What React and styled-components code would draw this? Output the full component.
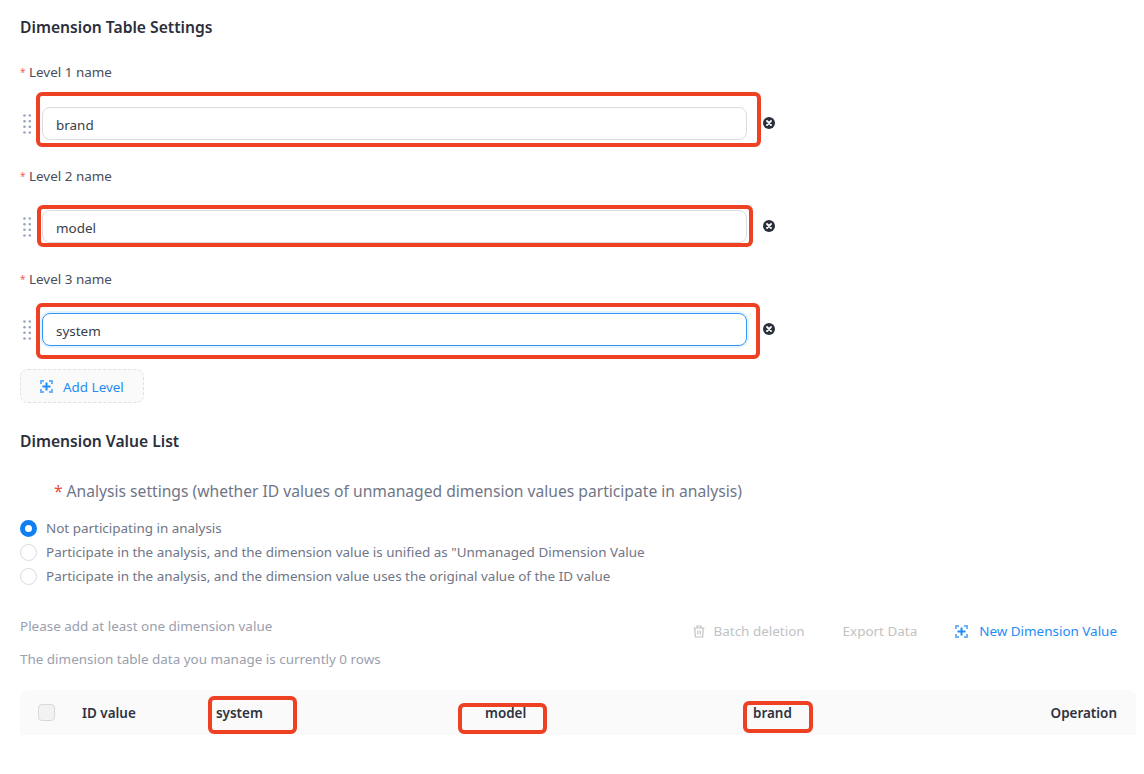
import React from "react";
import styled, { createGlobalStyle } from "styled-components";

const Global = createGlobalStyle`
  html, body { margin: 0; padding: 0; background: #fff; }
  body { font-family: "Noto Sans", "Open Sans", sans-serif; font-size: 13.45px; color: #2e3240; }
`;
const Page = styled.div`
  box-sizing: border-box;
  width: 1144px;
  height: 774px;
  overflow: hidden;
  padding: 16px 8px 0 20px;
`;
const Title = styled.h2`
  margin: ${(p) => p.$mt || 0}px 0 0;
  font-size: 15.65px;
  line-height: 22px;
  font-weight: 600;
  color: #2b2f3b;
`;
const Levels = styled.div`
  display: flex;
  flex-direction: column;
  gap: 24px;
  margin-top: 23px;
  width: 756px;
`;
const Level = styled.div`
  display: flex;
  flex-direction: column;
  gap: 24px;
`;
const Label = styled.label`
  display: flex;
  align-items: center;
  gap: 2px;
  font-size: 13.45px;
  line-height: 22px;
  color: #4a4e5c;
  position: relative;
  top: ${(p) => (p.$n > 1 ? 1 : 0)}px;
`;
const Star = styled.span`
  color: #f5605a;
  font-size: 10px;
  width: 7px;
`;
const Row = styled.div`
  display: flex;
  align-items: center;
  position: relative;
  height: 33px;
`;
const InputBox = styled.div`
  box-sizing: border-box;
  width: 705px;
  height: 33px;
  margin-left: 11px;
  padding: 2px 13px 0;
  border-radius: 8px;
  border: 1px solid ${(p) => (p.$focus ? "#2f95f7" : "#dcdcdc")};
  box-shadow: ${(p) => (p.$focus ? "0 0 0 2px #e6f3fe" : "none")};
  display: flex;
  align-items: center;
  font-size: 13.45px;
  color: #3a3e4b;
`;
const RemoveIcon = styled.svg`
  margin: 0 0 1px 16px;
  flex: none;
`;
const Mark = styled.div`
  position: absolute;
  box-sizing: border-box;
  border: 4px solid #ee4023;
  border-radius: 6px;
  pointer-events: none;
  left: ${(p) => p.$l}px;
  top: ${(p) => p.$t}px;
  width: ${(p) => p.$w}px;
  height: ${(p) => p.$h}px;
`;
const AddButton = styled.button`
  box-sizing: border-box;
  display: flex;
  align-items: center;
  gap: 10px;
  margin-top: 23px;
  width: 124px;
  height: 34px;
  padding: 1px 0 0 19px;
  background: #fafafa;
  border: 1px dashed #e0e0e0;
  border-radius: 8px;
  color: #1f8cf5;
  font: inherit;
  font-size: 13.45px;
`;
const Analysis = styled.div`
  margin: 27px 0 0 34px;
  font-size: 15.63px;
  line-height: 24px;
  color: #6f7687;
`;
const Req = styled.span`
  color: #e5483d;
  margin-right: 4px;
`;
const Radios = styled.div`
  display: flex;
  flex-direction: column;
  margin-top: 13px;
`;
const RadioRow = styled.div`
  display: flex;
  align-items: center;
  gap: 9px;
  height: 24px;
  font-size: 13.45px;
  color: #6f7687;
`;
const RadioDot = styled.span`
  box-sizing: border-box;
  width: 17px;
  height: 17px;
  border-radius: 50%;
  border: ${(p) => (p.$on ? "5.5px solid #0f7ff2" : "1px solid #d9d9d9")};
  background: #fff;
`;
const ToolbarZone = styled.div`
  display: flex;
  justify-content: space-between;
  margin-top: 27px;
`;
const Notes = styled.div`
  display: flex;
  flex-direction: column;
  gap: 11px;
  font-size: 13.45px;
  line-height: 22px;
  color: #9aa0ae;
`;
const Actions = styled.div`
  display: flex;
  align-items: center;
  height: 22px;
  margin: 5px 19px 0 0;
  font-size: 13.45px;
`;
const Action = styled.span`
  display: flex;
  align-items: center;
  gap: ${(p) => p.$gap || 0}px;
  margin-left: ${(p) => p.$ml || 0}px;
  color: ${(p) => (p.$primary ? "#1f8cf5" : "#c2c2c2")};
`;
const Table = styled.div`
  display: grid;
  grid-template-columns: 62px 134px 269px 268px 1fr auto;
  align-items: start;
  width: 1116px;
  height: 45px;
  margin-top: 20px;
  background: #fafafa;
  border-radius: 8px 8px 0 0;
  position: relative;
  font-size: 13.45px;
  font-weight: 600;
  color: #2e3240;
`;
const Cell = styled.div`
  line-height: 22px;
  padding-top: 12px;
  text-align: ${(p) => (p.$right ? "right" : "left")};
  padding-right: ${(p) => (p.$right ? 19 : 0)}px;
`;
const CheckCell = styled.div`
  padding: 14px 0 0 18px;
`;
const Check = styled.span`
  display: block;
  box-sizing: border-box;
  width: 17px;
  height: 17px;
  border-radius: 4px;
  border: 1px solid #d9d9d9;
  background: #f2f2f2;
`;

const Handle = () => (
  <svg width="8" height="20" viewBox="0 0 8 20" fill="#9aa5b8" style={{ marginLeft: 3, flex: "none" }}>
    {[1.5, 7.2, 12.8, 18.5].map((y) => [1.5, 6.8].map((x) => <circle key={`${x}-${y}`} cx={x} cy={y} r="1.3" />))}
  </svg>
);
const Remove = () => (
  <RemoveIcon width="12" height="12" viewBox="0 0 12 12">
    <circle cx="6" cy="6" r="6" fill="#2b2f3b" />
    <path d="M4 4l4 4M8 4l-4 4" stroke="#fff" strokeWidth="1.8" strokeLinecap="round" />
  </RemoveIcon>
);
const AddIcon = ({ color = "#1f8cf5" }) => (
  <svg width="13" height="13" viewBox="0 0 13 13" fill="none" stroke={color}>
    <path d="M1 4V1h3M9 1h3v3M12 9v3H9M4 12H1V9" strokeWidth="2" opacity="0.65" />
    <path d="M2.500 6.500h8M6.500 2.500v8" strokeWidth="2" />
  </svg>
);
const Trash = () => (
  <svg width="12" height="13" viewBox="0 0 12 13" fill="none" stroke="#c2c2c2" strokeWidth="1.200">
    <path d="M.5 3h11M4 3V1h4v2M1.800 3l.5 9h7.400l.5-9M4.800 5.500v4M7.200 5.500v4" />
  </svg>
);

const levels = [
  { n: 1, v: "brand", m: { l: 16, t: -15, w: 725, h: 55 } },
  { n: 2, v: "model", m: { l: 17, t: -5, w: 716, h: 42 } },
  { n: 3, v: "system", focus: true, m: { l: 16, t: -10, w: 724, h: 56 } },
];

export default function App() {
  return (
    <Page>
      <Global />
      <Title>Dimension Table Settings</Title>
      <Levels>
        {levels.map((l) => (
          <Level key={l.n}>
            <Label $n={l.n}><Star>*</Star>Level {l.n} name</Label>
            <Row>
              <Handle />
              <InputBox $focus={l.focus}>{l.v}</InputBox>
              <Remove />
              <Mark $l={l.m.l} $t={l.m.t} $w={l.m.w} $h={l.m.h} />
            </Row>
          </Level>
        ))}
      </Levels>
      <AddButton><AddIcon />Add Level</AddButton>
      <Title $mt={27}>Dimension Value List</Title>
      <Analysis><Req>*</Req>Analysis settings (whether ID values of unmanaged dimension values participate in analysis)</Analysis>
      <Radios>
        <RadioRow><RadioDot $on />Not participating in analysis</RadioRow>
        <RadioRow><RadioDot />Participate in the analysis, and the dimension value is unified as "Unmanaged Dimension Value</RadioRow>
        <RadioRow><RadioDot />Participate in the analysis, and the dimension value uses the original value of the ID value</RadioRow>
      </Radios>
      <ToolbarZone>
        <Notes>
          <span>Please add at least one dimension value</span>
          <span>The dimension table data you manage is currently 0 rows</span>
        </Notes>
        <Actions>
          <Action $gap={9}><Trash />Batch deletion</Action>
          <Action $ml={38}>Export Data</Action>
          <Action $ml={38} $gap={11} $primary><AddIcon />New Dimension Value</Action>
        </Actions>
      </ToolbarZone>
      <Table>
        <CheckCell><Check /></CheckCell>
        <Cell>ID value</Cell>
        <Cell>system</Cell>
        <Cell>model</Cell>
        <Cell>brand</Cell>
        <Cell $right>Operation</Cell>
        <Mark $l={188} $t={6} $w={89} $h={38} />
        <Mark $l={438} $t={13} $w={89} $h={31} />
        <Mark $l={723} $t={11} $w={70} $h={32} />
      </Table>
    </Page>
  );
}
